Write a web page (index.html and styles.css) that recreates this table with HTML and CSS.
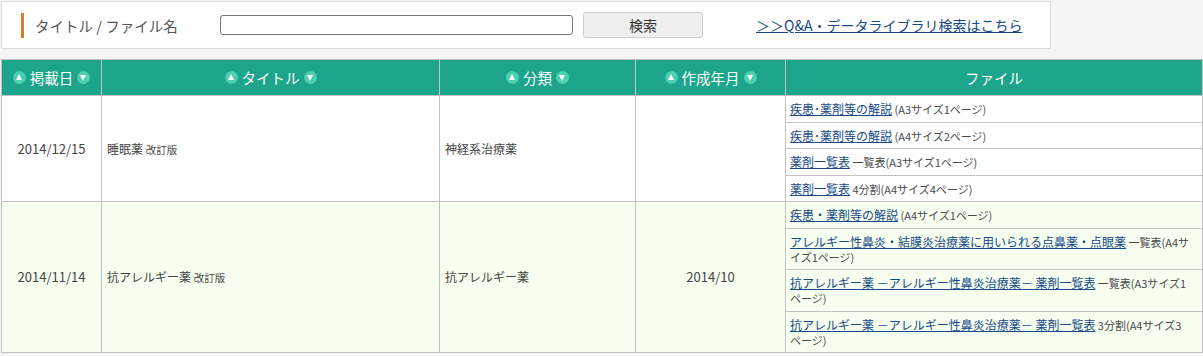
FILE: index.html
```html
<!DOCTYPE html>
<html lang="ja">
<head>
<meta charset="utf-8">
<title>データライブラリ</title>
<link rel="stylesheet" href="styles.css">
</head>
<body>
<div class="page">
  <form class="search">
    <label class="search-label" for="q">タイトル / ファイル名</label>
    <input class="search-input" id="q" type="text">
    <button class="search-btn" type="button">検索</button>
    <a class="search-link" href="#">＞＞Q&amp;A・データライブラリ検索はこちら</a>
  </form>

  <table class="list">
    <colgroup>
      <col class="c-date">
      <col class="c-title">
      <col class="c-cat">
      <col class="c-made">
      <col class="c-file">
    </colgroup>
    <thead>
      <tr>
        <th><span class="sort"><i class="arr up"></i>掲載日<i class="arr down"></i></span></th>
        <th><span class="sort"><i class="arr up"></i>タイトル<i class="arr down"></i></span></th>
        <th><span class="sort"><i class="arr up"></i>分類<i class="arr down"></i></span></th>
        <th><span class="sort"><i class="arr up"></i>作成年月<i class="arr down"></i></span></th>
        <th>ファイル</th>
      </tr>
    </thead>
    <tbody>
      <tr>
        <td class="center">2014/12/15</td>
        <td>睡眠薬 <small>改訂版</small></td>
        <td>神経系治療薬</td>
        <td class="center"></td>
        <td class="files">
          <ul>
            <li><a href="#">疾患･薬剤等の解説</a> (A3サイズ1ページ)</li>
            <li><a href="#">疾患･薬剤等の解説</a> (A4サイズ2ページ)</li>
            <li><a href="#">薬剤一覧表</a> 一覧表(A3サイズ1ページ)</li>
            <li><a href="#">薬剤一覧表</a> 4分割(A4サイズ4ページ)</li>
          </ul>
        </td>
      </tr>
      <tr class="alt">
        <td class="center">2014/11/14</td>
        <td>抗アレルギー薬 <small>改訂版</small></td>
        <td>抗アレルギー薬</td>
        <td class="center">2014/10</td>
        <td class="files">
          <ul>
            <li><a href="#">疾患・薬剤等の解説</a> (A4サイズ1ページ)</li>
            <li><a href="#">アレルギー性鼻炎・結膜炎治療薬に用いられる点鼻薬・点眼薬</a> 一覧表(A4サイズ1ページ)</li>
            <li><a href="#">抗アレルギー薬 －アレルギー性鼻炎治療薬－ 薬剤一覧表</a> 一覧表(A3サイズ1ページ)</li>
            <li><a href="#">抗アレルギー薬 －アレルギー性鼻炎治療薬－ 薬剤一覧表</a> 3分割(A4サイズ3ページ)</li>
          </ul>
        </td>
      </tr>
    </tbody>
  </table>
</div>
</body>
</html>
```

FILE: styles.css
```css
html, body {
  margin: 0;
  padding: 0;
  background: #f4f5f4;
}

body {
  font-family: "Noto Sans CJK JP", "Noto Sans", sans-serif;
  color: #444;
  font-size: 12px;
}

.page {
  padding: 1px 1px 0 1px;
}

/* search bar */
.search {
  box-sizing: border-box;
  width: 1050px;
  height: 48px;
  margin: 0;
  background: #fff;
  border: 1px solid #dcdcdc;
  display: flex;
  align-items: center;
  padding-left: 19px;
}

.search-label {
  border-left: 3px solid #d9802e;
  padding-left: 11px;
  height: 25px;
  line-height: 25px;
  font-size: 14.5px;
  color: #555;
  width: 185px;
}

.search-input {
  box-sizing: border-box;
  width: 353px;
  height: 20px;
  border: 1px solid #777;
  border-radius: 3px;
  margin: 0;
  padding: 0 4px;
  background: #fff;
}

.search-btn {
  box-sizing: border-box;
  width: 120px;
  height: 26px;
  margin-left: 10px;
  background: #efefef;
  border: 1px solid #cfcfcf;
  border-radius: 3px;
  font-family: inherit;
  font-size: 14px;
  color: #333;
  padding: 0;
}

.search-link {
  margin-left: 53px;
  font-size: 14px;
  color: #174a86;
  text-decoration: underline;
}

/* table */
.list {
  margin-top: 10px;
  width: 1201px;
  border-collapse: collapse;
  table-layout: fixed;
  background: #fff;
}

.c-date { width: 100px; }
.c-title { width: 338px; }
.c-cat { width: 196px; }
.c-made { width: 150px; }
.c-file { width: 417px; }

.list th,
.list td {
  border: 1px solid #c2c2c2;
}

.list th {
  background: #1ca58a;
  color: #fff;
  font-weight: normal;
  font-size: 14.5px;
  height: 35px;
  padding: 0;
  text-align: center;
  vertical-align: middle;
}

.sort {
  display: inline-flex;
  align-items: center;
  gap: 4px;
}

.arr {
  display: inline-block;
  width: 13px;
  height: 13px;
  border-radius: 50%;
  background: #4cd0b0;
  position: relative;
}

.arr::after {
  content: "";
  position: absolute;
  left: 3px;
  width: 0;
  height: 0;
  border-left: 3.5px solid transparent;
  border-right: 3.5px solid transparent;
}

.arr.up::after {
  top: 3px;
  border-bottom: 6px solid #fff;
}

.arr.down::after {
  top: 4px;
  border-top: 6px solid #fff;
}

.list td {
  padding: 0 5px;
  vertical-align: middle;
  line-height: 16px;
  font-size: 12px;
}

.list td.center {
  text-align: center;
  font-size: 13px;
}

.list tr.alt td {
  background: #f6fff0;
}

small {
  font-size: 10.5px;
  line-height: 1;
  color: #4a4a4a;
}

/* file list: link in 12px, size note in the smaller body text */
.list td.files {
  padding: 0;
}

.files ul {
  list-style: none;
  margin: 0;
  padding: 0;
}

.files li {
  padding: 5px 11px 4.5px 4px;
  border-top: 1px solid #c2c2c2;
  font-size: 11px;
  line-height: 15px;
  color: #4a4a4a;
}

.files li:first-child {
  border-top: 0;
}

.files a {
  font-size: 12px;
  line-height: 15.5px;
  color: #174a86;
  text-decoration: underline;
}
```
